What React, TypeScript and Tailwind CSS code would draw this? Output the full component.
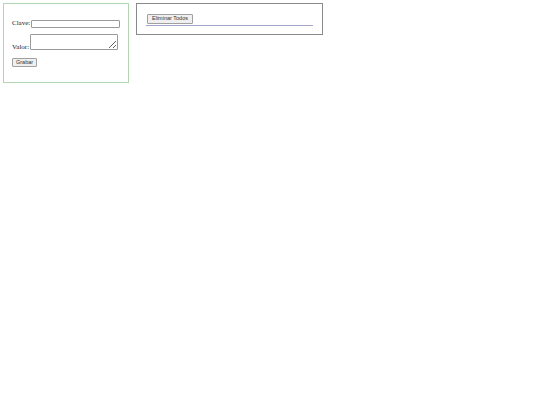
import React from "react";

const serif = { fontFamily: '"Liberation Serif", serif' };

export default function App() {
  return (
    <div className="min-h-screen bg-white flex items-start gap-[7px] p-[3px] leading-none">
      <div className="w-[126px] h-[80px] border border-[#b2d6b2] pl-[8px] pt-[15px] flex flex-col">
        <div className="flex items-center h-[9px] text-[7px] text-[#222]" style={serif}>
          <span>Clave:</span>
          <input
            type="text"
            className="ml-[1px] w-[89px] h-[8px] border border-[#9a9a9a] rounded-[1px] bg-white"
          />
        </div>
        <div className="flex items-end mt-[6px] text-[7px] text-[#222]" style={serif}>
          <span className="leading-[8px] mb-[-1px]">Valor:</span>
          <textarea className="ml-[1px] w-[88px] h-[16px] border border-[#9a9a9a] rounded-[1px] bg-white resize-y" />
        </div>
        <div className="mt-[8px] flex">
          <button className="h-[9px] px-[3px] text-[5.5px] leading-none border border-[#a0a0a0] rounded-[1px] bg-[#efefef] text-[#333] font-['Liberation_Sans',sans-serif]">
            Grabar
          </button>
        </div>
      </div>
      <div className="w-[187px] h-[32px] border border-[#8a8a8a] px-[9px] pt-[10px] flex flex-col items-stretch">
        <div className="flex">
          <button className="ml-[1px] h-[10px] px-[4px] text-[5.5px] leading-none border border-[#a0a0a0] rounded-[1px] bg-[#efefef] text-[#333] font-['Liberation_Sans',sans-serif]">
            Eliminar Todos
          </button>
        </div>
        <div className="mt-[1px] border-b border-[#a4a4cc]" />
      </div>
    </div>
  );
}
